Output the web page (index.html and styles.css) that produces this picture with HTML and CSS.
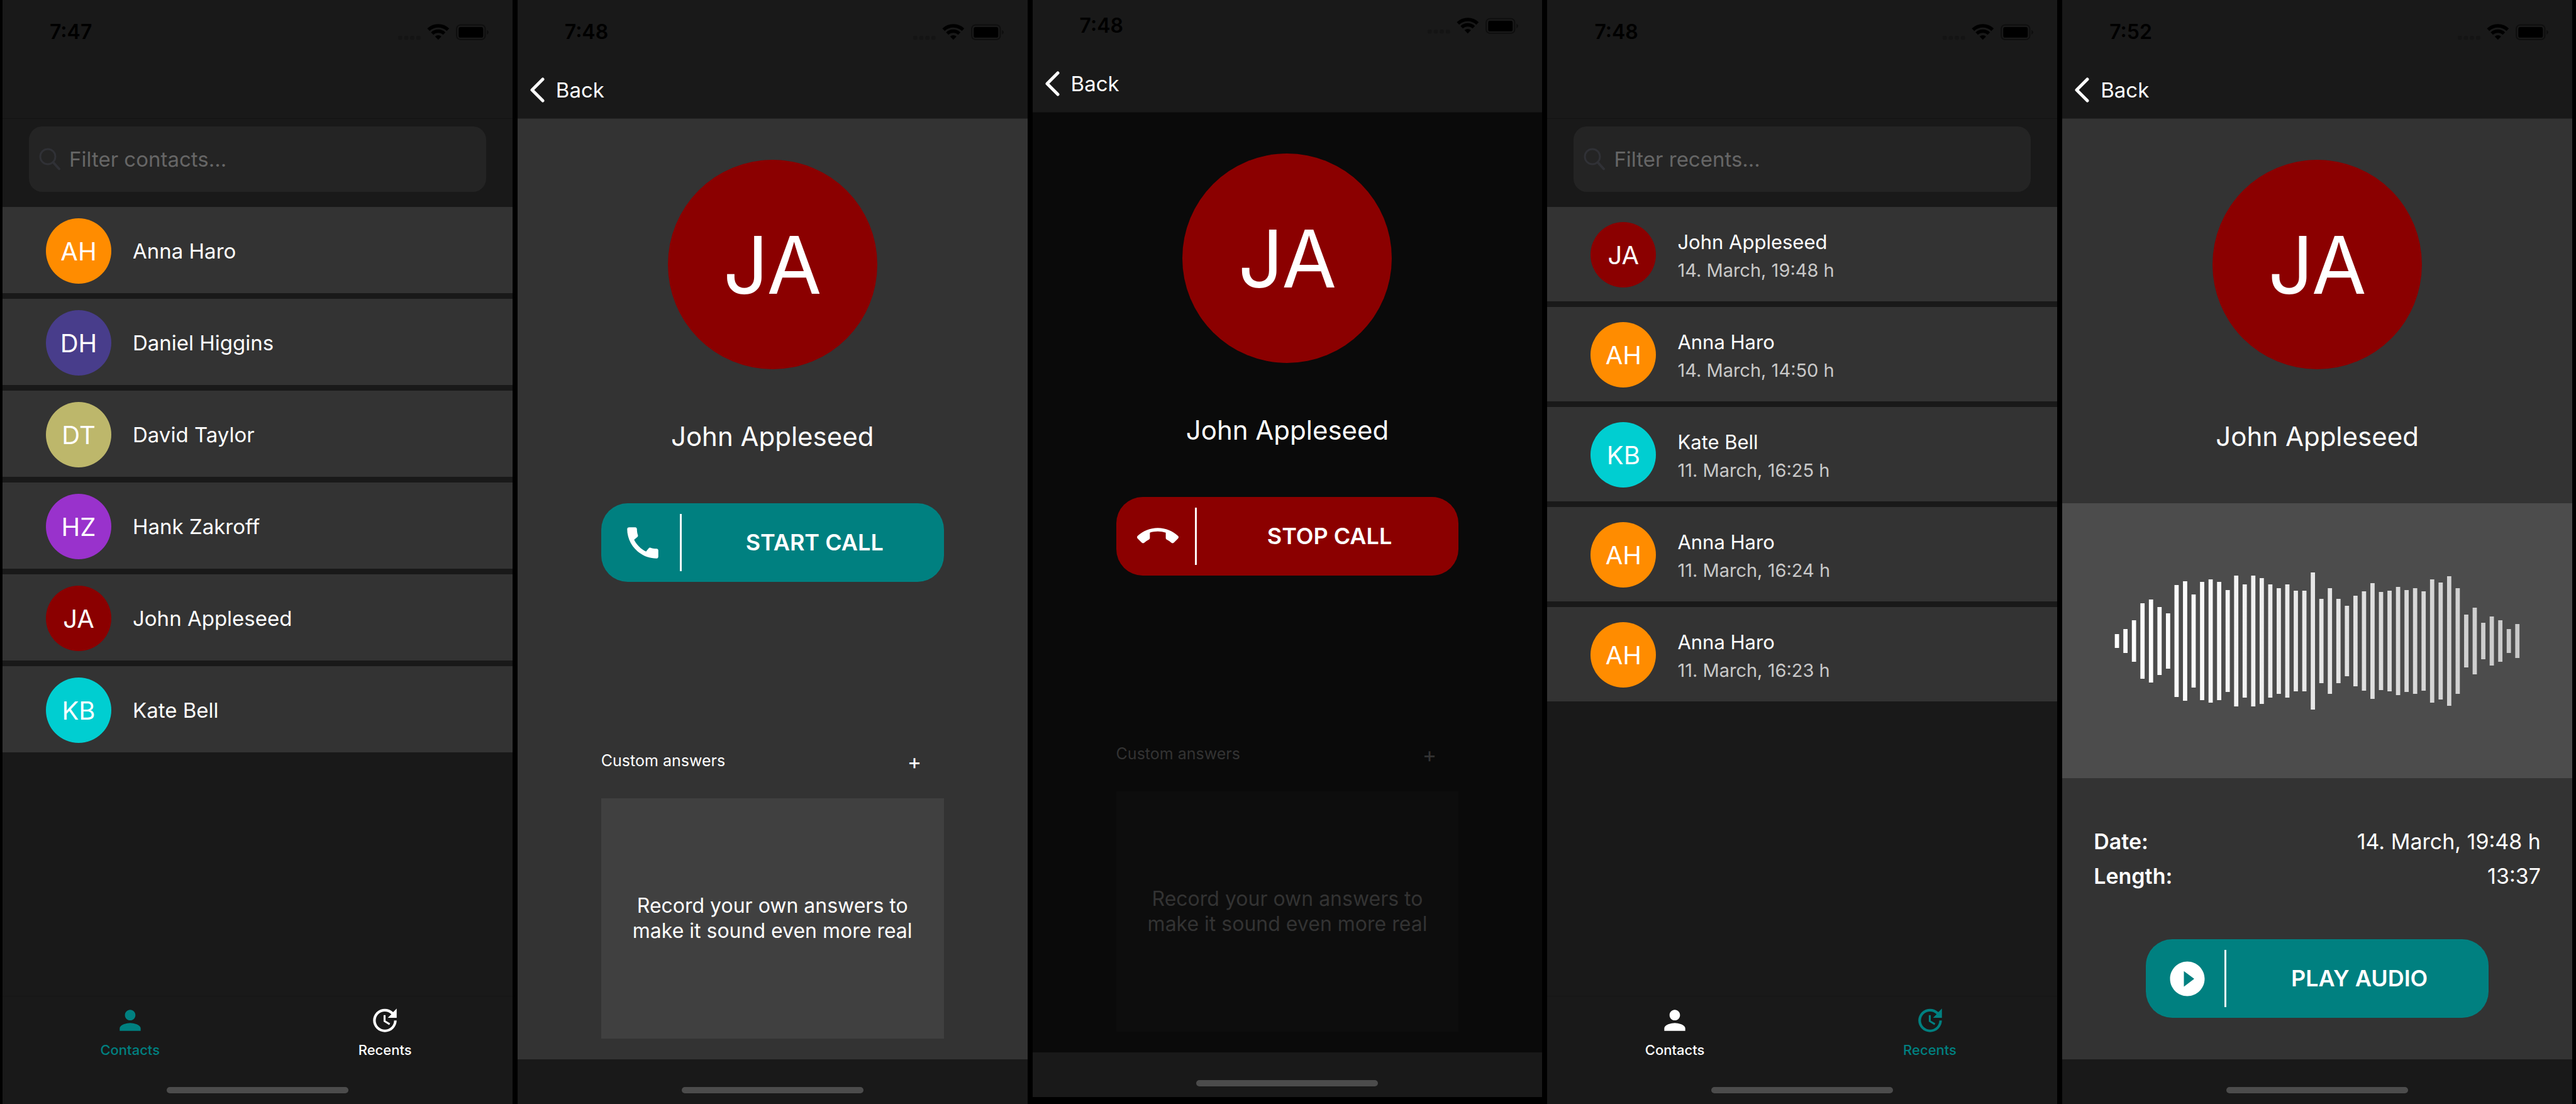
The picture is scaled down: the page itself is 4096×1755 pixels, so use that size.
FILE: index.html
```html
<!DOCTYPE html>
<html lang="en">
<head>
<meta charset="utf-8">
<meta name="viewport" content="width=device-width, initial-scale=1">
<title>Fake call</title>
<link rel="stylesheet" href="styles.css">
</head>
<body>
<svg class="sprite" aria-hidden="true">
  <symbol id="status" viewBox="41 42 625 111">
    <g fill="#141414"><rect x="41" y="123" width="28" height="28" rx="9"/><rect x="83" y="123" width="28" height="28" rx="9"/><rect x="125" y="123" width="28" height="28" rx="9"/><rect x="167" y="123" width="28" height="28" rx="9"/></g>
    <path d="M250.600 81.200A97 97 0 0 1 385.400 81.200" fill="none" stroke="#000" stroke-width="24"/>
    <path d="M276.300 107.800A60 60 0 0 1 359.700 107.800" fill="none" stroke="#000" stroke-width="23"/>
    <path d="M318 151L296 128A32 32 0 0 1 340 128Z"/>
    <rect x="445" y="48" width="197" height="101" rx="26" fill="none" stroke="#0e0e0e" stroke-width="8"/>
    <rect x="459" y="63" width="169" height="73" rx="13"/>
    <path d="M654 83Q666 88 666 99T654 115Z" fill="#0e0e0e"/>
  </symbol>
  <symbol id="search" viewBox="0 0 34 36"><circle cx="14" cy="14" r="12" fill="none" stroke="currentColor" stroke-width="3"/><path d="M22.500 23L32 33.500" fill="none" stroke="currentColor" stroke-width="4" stroke-linecap="round"/></symbol>
  <symbol id="chevron" viewBox="0 0 24 40"><path d="M21 3L4 20L21 37" fill="none" stroke="currentColor" stroke-width="5" stroke-linecap="round" stroke-linejoin="round"/></symbol>
  <symbol id="person" viewBox="0 0 24 24"><path d="M12 12c2.210 0 4-1.790 4-4s-1.790-4-4-4-4 1.790-4 4 1.790 4 4 4zm0 2c-2.670 0-8 1.340-8 4v2h16v-2c0-2.660-5.330-4-8-4z"/></symbol>
  <symbol id="update" viewBox="0 0 24 24"><path d="M21 10.120h-6.780l2.740-2.820c-2.730-2.700-7.150-2.800-9.880-.1-2.730 2.710-2.730 7.080 0 9.790s7.150 2.710 9.880 0C18.320 15.650 19 14.080 19 12.100h2c0 1.980-.88 4.550-2.640 6.290-3.510 3.480-9.210 3.480-12.720 0-3.500-3.470-3.530-9.110-.02-12.580s9.140-3.470 12.650 0L21 3v7.120zM12.500 8v4.250l3.500 2.080-.72 1.210L11 13V8h1.500z"/></symbol>
  <symbol id="call" viewBox="0 0 24 24"><path d="M20.010 15.380c-1.230 0-2.420-.2-3.530-.56-.35-.12-.74-.03-1.010.24l-1.570 1.970c-2.830-1.350-5.480-3.900-6.890-6.830l1.950-1.660c.27-.28.35-.67.24-1.020-.37-1.110-.56-2.300-.56-3.530 0-.54-.45-.99-.99-.99H4.190C3.650 3 3 3.240 3 3.990 3 13.280 10.730 21 20.010 21c.71 0 .99-.63.99-1.180v-3.450c0-.54-.45-.99-.99-.99z"/></symbol>
  <symbol id="call-end" viewBox="0 0 24 24"><path d="M12 9c-1.600 0-3.150.25-4.600.72v3.100c0 .39-.23.74-.56.9-.98.49-1.870 1.120-2.660 1.850-.18.18-.43.28-.7.28-.28 0-.53-.11-.71-.29L.29 13.080c-.18-.17-.29-.42-.29-.7 0-.28.11-.53.29-.71C3.340 8.780 7.460 7 12 7s8.660 1.780 11.710 4.670c.18.18.29.43.29.71 0 .28-.11.53-.29.71l-2.480 2.480c-.18.18-.43.29-.71.29-.27 0-.52-.11-.7-.28-.79-.74-1.690-1.360-2.670-1.850-.33-.16-.56-.5-.56-.9v-3.100C15.150 9.250 13.600 9 12 9z"/></symbol>
  <symbol id="play" viewBox="0 0 24 24"><path d="M12 2C6.480 2 2 6.480 2 12s4.480 10 10 10 10-4.480 10-10S17.520 2 12 2zm-2 14.500v-9l6 4.500-6 4.500z"/></symbol>
</svg>

<main class="gallery">

  <section class="screen" aria-label="Contacts">
    <header class="top">
      <div class="status"><time>7:47</time><svg class="status-icons"><use href="#status"/></svg></div>
      <div class="navbar"></div>
    </header>
    <label class="search"><svg class="search-icon"><use href="#search"/></svg><input type="search" placeholder="Filter contacts..." aria-label="Filter contacts"></label>
    <ul class="list">
      <li class="row"><span class="avatar orange">AH</span><span class="name">Anna Haro</span></li>
      <li class="row"><span class="avatar indigo">DH</span><span class="name">Daniel Higgins</span></li>
      <li class="row"><span class="avatar khaki">DT</span><span class="name">David Taylor</span></li>
      <li class="row"><span class="avatar violet">HZ</span><span class="name">Hank Zakroff</span></li>
      <li class="row"><span class="avatar red">JA</span><span class="name">John Appleseed</span></li>
      <li class="row"><span class="avatar cyan">KB</span><span class="name">Kate Bell</span></li>
    </ul>
    <nav class="tabs">
      <a class="tab active" href="#contacts"><svg><use href="#person"/></svg>Contacts</a>
      <a class="tab" href="#recents"><svg><use href="#update"/></svg>Recents</a>
    </nav>
    <footer class="home"><span class="home-bar"></span></footer>
  </section>

  <section class="screen" aria-label="Start call">
    <header class="top filled">
      <div class="status"><time>7:48</time><svg class="status-icons"><use href="#status"/></svg></div>
      <div class="navbar"><a class="back" href="#contacts"><svg><use href="#chevron"/></svg>Back</a></div>
    </header>
    <div class="detail">
      <span class="avatar large red">JA</span>
      <h2 class="person">John Appleseed</h2>
      <button class="action" type="button"><svg><use href="#call"/></svg><span>START CALL</span></button>
      <div class="answers">
        <div class="answers-head"><h3>Custom answers</h3><button class="add" type="button" aria-label="Add answer">+</button></div>
        <p class="answers-box">Record your own answers to<br>make it sound even more real</p>
      </div>
    </div>
    <footer class="home"><span class="home-bar"></span></footer>
  </section>

  <section class="screen calling" aria-label="Stop call">
    <header class="top">
      <div class="status"><time>7:48</time><svg class="status-icons"><use href="#status"/></svg></div>
      <div class="navbar"><a class="back" href="#contacts"><svg><use href="#chevron"/></svg>Back</a></div>
    </header>
    <div class="detail">
      <span class="avatar large red">JA</span>
      <h2 class="person">John Appleseed</h2>
      <button class="action stop" type="button"><svg><use href="#call-end"/></svg><span>STOP CALL</span></button>
      <div class="answers">
        <div class="answers-head"><h3>Custom answers</h3><button class="add" type="button" aria-label="Add answer">+</button></div>
        <p class="answers-box">Record your own answers to<br>make it sound even more real</p>
      </div>
    </div>
    <footer class="home"><span class="home-bar"></span></footer>
  </section>

  <section class="screen" aria-label="Recents">
    <header class="top">
      <div class="status"><time>7:48</time><svg class="status-icons"><use href="#status"/></svg></div>
      <div class="navbar"></div>
    </header>
    <label class="search"><svg class="search-icon"><use href="#search"/></svg><input type="search" placeholder="Filter recents..." aria-label="Filter recents"></label>
    <ul class="list recents">
      <li class="row"><span class="avatar red">JA</span><span class="entry"><span class="caller">John Appleseed</span><time>14. March, 19:48 h</time></span></li>
      <li class="row"><span class="avatar orange">AH</span><span class="entry"><span class="caller">Anna Haro</span><time>14. March, 14:50 h</time></span></li>
      <li class="row"><span class="avatar cyan">KB</span><span class="entry"><span class="caller">Kate Bell</span><time>11. March, 16:25 h</time></span></li>
      <li class="row"><span class="avatar orange">AH</span><span class="entry"><span class="caller">Anna Haro</span><time>11. March, 16:24 h</time></span></li>
      <li class="row"><span class="avatar orange">AH</span><span class="entry"><span class="caller">Anna Haro</span><time>11. March, 16:23 h</time></span></li>
    </ul>
    <nav class="tabs">
      <a class="tab" href="#contacts"><svg><use href="#person"/></svg>Contacts</a>
      <a class="tab active" href="#recents"><svg><use href="#update"/></svg>Recents</a>
    </nav>
    <footer class="home"><span class="home-bar"></span></footer>
  </section>

  <section class="screen" aria-label="Recording">
    <header class="top filled">
      <div class="status"><time>7:52</time><svg class="status-icons"><use href="#status"/></svg></div>
      <div class="navbar"><a class="back" href="#recents"><svg><use href="#chevron"/></svg>Back</a></div>
    </header>
    <div class="detail">
      <span class="avatar large red">JA</span>
      <h2 class="person">John Appleseed</h2>
      <div class="wave">
        <svg viewBox="-3 0 476 220" preserveAspectRatio="none" role="img" aria-label="Audio waveform">
          <defs>
            <linearGradient id="tone" gradientUnits="userSpaceOnUse" x1="0" y1="0" x2="473" y2="0"><stop offset="0" stop-color="#fff"/><stop offset="0.2" stop-color="#fafafa"/><stop offset="0.5" stop-color="#e6e6e6"/><stop offset="1" stop-color="#c8c8c8"/></linearGradient>
          </defs>
          <path fill="none" stroke="url(#tone)" stroke-width="5" d="M0 99v22M10 91v38M20 77v66M30 50v120M40 44v132M50 56v108M60 66v88M70 21v178M80 15v190M90 36v148M100 16v188M110 12v196M120 16v188M130 29v162M140 6v208M150 20v180M160 6v208M170 10v200M180 20v180M190 26v168M200 20v180M210 30v160M220 30v160M230 1v218M240 43v134M250 26v168M260 43v134M270 54v112M280 38v144M290 31v158M300 18v184M310 32v156M320 30v160M330 24v172M340 29v162M350 26v168M360 31v158M370 12v196M380 17v186M390 7v206M400 26v168M410 68v84M420 57v106M430 81v58M440 71v78M450 77v66M460 91v38M470 83v54"/>
        </svg>
      </div>
      <dl class="facts">
        <div><dt>Date:</dt><dd>14. March, 19:48 h</dd></div>
        <div><dt>Length:</dt><dd>13:37</dd></div>
      </dl>
      <button class="action play" type="button"><svg><use href="#play"/></svg><span>PLAY AUDIO</span></button>
    </div>
    <footer class="home"><span class="home-bar"></span></footer>
  </section>

</main>
</body>
</html>
```

FILE: styles.css
```css
* { box-sizing: border-box; }

body {
  margin: 0;
  background: #000;
  color: #fff;
  font-family: Inter, "Liberation Sans", sans-serif;
  font-size: 33px;
}

h2, h3, p, ul, dl, dd { margin: 0; padding: 0; font-weight: 400; }
a { color: inherit; text-decoration: none; }
svg { flex: none; fill: currentColor; }
button { border: 0; padding: 0; color: inherit; font: inherit; cursor: pointer; }

.sprite { position: absolute; width: 0; height: 0; }

.gallery {
  display: grid;
  grid-template-columns: repeat(5, minmax(0, 1fr));
  gap: 8px;
  min-height: 100vh;
  padding: 0 6px 1px 4px;
}

.screen { display: flex; flex-direction: column; background: #191919; }

/* Status bar and navigation bar */
.top { border-bottom: 1px solid #121212; }
.top.filled { border-color: #262626; }

.status {
  display: flex;
  align-items: center;
  justify-content: space-between;
  padding: 31px 38px 27px 75px;
  color: #000;
  font-size: 32px;
  font-weight: 600;
  line-height: 40px;
}
.status-icons { width: 144px; height: 26px; }

.navbar { display: flex; align-items: center; height: 90px; }
.back { display: flex; align-items: center; gap: 18px; padding-left: 19px; line-height: 44px; }
.back svg { width: 24px; height: 40px; }

/* Search field */
.search {
  display: flex;
  align-items: center;
  gap: 14px;
  height: 104px;
  margin: 12px 42px 24px;
  padding: 0 16px;
  border-radius: 21px;
  background: #242424;
  color: #303136;
}
.search-icon { width: 34px; height: 36px; }
.search input {
  flex: 1;
  min-width: 0;
  padding: 0;
  border: 0;
  outline: 0;
  appearance: none;
  background: none;
  color: #fff;
  font: inherit;
}
.search input::placeholder { color: #666; opacity: 1; }

/* Lists */
.list { display: flex; flex-direction: column; gap: 9px; list-style: none; }
.row {
  display: flex;
  align-items: center;
  gap: 34px;
  padding: 18px 69px 15px;
  background: #333;
}
.recents .row { padding: 24px 69px 22px; }

.avatar {
  display: flex;
  flex: none;
  align-items: center;
  justify-content: center;
  width: 104px;
  height: 104px;
  border-radius: 50%;
  font-size: 40px;
}
.avatar.large { width: 333px; height: 333px; font-size: 126px; }
.orange { background: #ff8c00; }
.indigo { background: #483d8b; }
.khaki { background: #bdb76b; }
.violet { background: #9932cc; }
.red { background: #8b0000; }
.cyan { background: #00ced1; }

.entry { display: flex; flex-direction: column; padding-top: 4px; font-size: 31px; line-height: 45px; }
.entry time { color: #c8c8c8; font-size: 29px; }

/* Tab bar */
.tabs { display: flex; margin-top: auto; border-top: 1px solid #141414; }
.tab {
  display: flex;
  flex: 1;
  flex-direction: column;
  align-items: center;
  gap: 9px;
  padding: 13px 0 19px;
  font-size: 22px;
  font-weight: 500;
  line-height: 26px;
}
.tab svg { width: 50px; height: 50px; }
.tab.active { color: #008080; }
.tabs + .home { height: 54px; }

.home { display: flex; align-items: flex-end; justify-content: center; height: 71px; padding-bottom: 17px; }
.home-bar { width: 289px; height: 10px; border-radius: 5px; background: #4c4c4c; }

/* Detail screens */
.detail {
  display: flex;
  flex: 1;
  flex-direction: column;
  align-items: center;
  padding-top: 65px;
  background: #333;
}
.person { margin: 77px 0 76px; font-size: 42px; line-height: 60px; }

.action {
  display: flex;
  align-items: center;
  gap: 26px;
  align-self: stretch;
  height: 125px;
  margin: 0 133px;
  padding-left: 33px;
  border-radius: 42px;
  background: #008080;
  font-size: 36px;
  font-weight: 600;
}
.action.stop { background: #8b0000; }
.action svg { width: 66px; height: 66px; }
.action span { flex: 1; padding-left: 6px; border-left: 3px solid #fff; line-height: 91px; }

.answers { align-self: stretch; margin: auto 133px 33px; }
.answers-head { display: flex; align-items: flex-start; justify-content: space-between; }
.answers-head h3 { font-size: 25px; line-height: 40px; }
.add { width: 93px; height: 44px; background: none; font-size: 34px; line-height: 44px; }
.answers-box {
  display: flex;
  align-items: center;
  justify-content: center;
  height: 382px;
  margin-top: 36px;
  background: #404040;
  font-size: 32px;
  line-height: 40px;
  text-align: center;
}

.wave {
  display: flex;
  align-items: center;
  align-self: stretch;
  height: 437px;
  padding: 0 83px;
  background: #4c4c4c;
}
.wave svg { flex: 1; height: 220px; }

.facts { align-self: stretch; padding: 73px 50px; font-size: 34px; line-height: 55px; }
.facts div { display: flex; justify-content: space-between; }
.facts dt { font-weight: 600; }
.play { margin-bottom: 66px; }

/* Call in progress: everything but the call itself is dimmed */
.calling { margin-bottom: 11px; }
.calling .status { padding-top: 21px; }
.calling .detail { background: #0a0a0a; }
.calling .answers { color: #333; }
.calling .answers-box { background: #0d0d0d; }
```
